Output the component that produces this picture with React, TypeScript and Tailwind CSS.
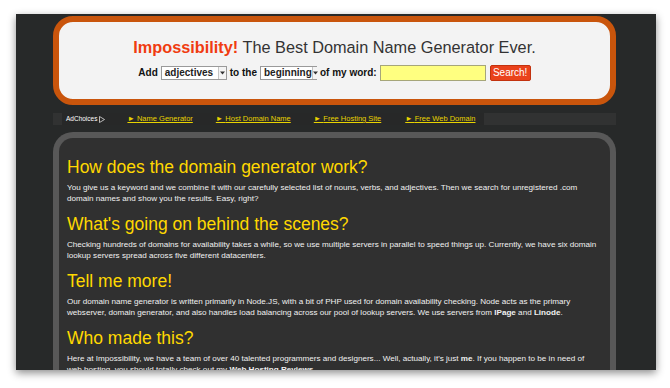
import React from "react"

const sections = [
  {
    title: "How does the domain generator work?",
    lines: [
      <>You give us a keyword and we combine it with our carefully selected list of nouns, verbs, and adjectives. Then we search for unregistered .com</>,
      <>domain names and show you the results. Easy, right?</>,
    ],
  },
  {
    title: "What's going on behind the scenes?",
    lines: [
      <>Checking hundreds of domains for availability takes a while, so we use multiple servers in parallel to speed things up. Currently, we have six domain</>,
      <>lookup servers spread across five different datacenters.</>,
    ],
  },
  {
    title: "Tell me more!",
    lines: [
      <>Our domain name generator is written primarily in Node.JS, with a bit of PHP used for domain availability checking. Node acts as the primary</>,
      <>
        webserver, domain generator, and also handles load balancing across our pool of lookup servers. We use servers from <b>IPage</b> and <b>Linode</b>.
      </>,
    ],
  },
  {
    title: "Who made this?",
    lines: [
      <>
        Here at Impossibility, we have a team of over 40 talented programmers and designers... Well, actually, it's just <b>me</b>. If you happen to be in need of
      </>,
      <>
        web hosting, you should totally check out my <b>Web Hosting Reviews</b>.
      </>,
    ],
  },
]

const links = [
  { label: "Name Generator", ml: "ml-[22px]" },
  { label: "Host Domain Name", ml: "ml-[23px]" },
  { label: "Free Hosting Site", ml: "ml-[23px]" },
  { label: "Free Web Domain", ml: "ml-[24px]" },
]

function FakeSelect({ value, width }: { value: string; width: string }) {
  return (
    <div className={`${width} h-[14px] flex items-center justify-between border border-[#9a9a9a] bg-white`}>
      <span className="pl-[3px] text-[10px] leading-[12px] text-[#222]">{value}</span>
      <span className="w-[8px] h-full flex items-center justify-center border-l border-[#c4c4c4] bg-[#f4f4f4]">
        <svg width="5" height="4" viewBox="0 0 5 4">
          <path d="M0 0.5 L5 0.5 L2.5 3.5 Z" fill="#333" />
        </svg>
      </span>
    </div>
  )
}

export default function App() {
  return (
    <div className="w-[670px] h-[388px] bg-white pt-[14px] pl-[16px] font-['Liberation_Sans',Arial,sans-serif]">
      <div className="w-[640px] h-[356px] bg-[#272929] overflow-hidden shadow-[0_3px_8px_rgba(0,0,0,0.45)]">
        {/* header */}
        <div className="ml-[37px] mt-[2px] w-[563px] rounded-[20px] border-[6px] border-[#c9550c] bg-[#f3f3f3] pt-[15px] pb-[18px]">
          <h1 className="text-center text-[16.3px] leading-[20px] text-[#333]">
            <span className="font-bold text-[#f03c10]">Impossibility!</span> The Best Domain Name Generator Ever.
          </h1>
          <div className="mt-[8px] h-[16px] flex items-center justify-center gap-[3px] text-[10px] leading-[12px] font-bold text-[#111]">
            <span>Add</span>
            <FakeSelect value="adjectives" width="w-[66px]" />
            <span>to the</span>
            <FakeSelect value="beginning" width="w-[57px]" />
            <span>of my word:</span>
            <div className="w-[106px] h-[16px] bg-[#ffff80] border border-[#a6a67a]" />
            <button className="ml-[1px] w-[41px] h-[16px] rounded-[2px] border border-[#c2320e] bg-[#ea421b] text-white text-[10px] font-normal leading-[14px]">
              Search!
            </button>
          </div>
        </div>

        {/* ad link bar */}
        <div className="ml-[37px] mt-[8px] w-[563px] h-[12px] flex bg-[#313232]">
          <div className="w-[9px]" />
          <div className="w-[422px] h-full flex items-center bg-[#272828]">
            <span className="ml-[4px] flex items-center text-[6.5px] text-white">
              AdChoices
              <svg className="ml-[2px]" width="6" height="7" viewBox="0 0 6 7">
                <path d="M0.5 0.5 L5.5 3.5 L0.5 6.5 Z" fill="none" stroke="#ddd" strokeWidth="0.8" />
              </svg>
            </span>
            {links.map((l) => (
              <span key={l.label} className={`${l.ml} text-[7.5px] leading-[10px] text-[#e8d300] underline`}>
                ► {l.label}
              </span>
            ))}
          </div>
        </div>

        {/* content */}
        <div className="ml-[37px] mt-[7px] w-[563px] h-[260px] rounded-t-[20px] border-[6px] border-b-0 border-[#585858] bg-[#303030] pl-[8px] pt-[19px]">
          {sections.map((s) => (
            <div key={s.title} className="mb-[9.5px]">
              <h2 className="text-[17.5px] leading-[20px] text-[#ffd800]">{s.title}</h2>
              <p className="mt-[4.5px] text-[8.1px] leading-[11.5px] text-[#f0f0f0] whitespace-nowrap">
                {s.lines[0]}
                <br />
                {s.lines[1]}
              </p>
            </div>
          ))}
        </div>
      </div>
    </div>
  )
}
